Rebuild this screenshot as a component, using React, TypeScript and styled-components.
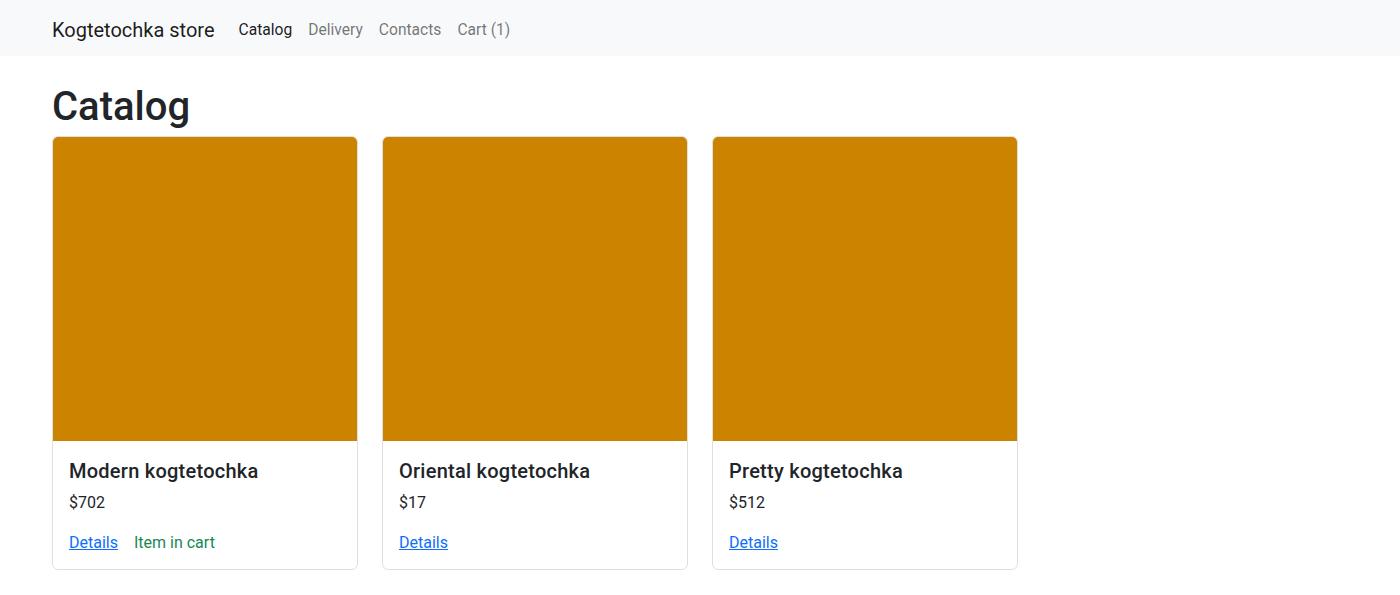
import React from "react";
import styled, { createGlobalStyle } from "styled-components";

const Global = createGlobalStyle`
  * { box-sizing: border-box; }
  body {
    margin: 0;
    font-family: "Segoe UI", Roboto, "Noto Sans", "Liberation Sans", sans-serif;
    font-size: 16px;
    line-height: 1.5;
    color: #212529;
    background: #fff;
  }
`;

const Navbar = styled.nav`
  background: #f8f9fa;
  padding: 8px 0;
`;

const Container = styled.div`
  max-width: 1320px;
  margin: 0 auto;
  padding: 0 12px;
`;

const NavInner = styled(Container)`
  display: flex;
  align-items: center;
`;

const Brand = styled.a`
  font-size: 20px;
  line-height: 30px;
  padding: 7px 0 3px;
  margin-right: 16px;
  color: rgba(0, 0, 0, 0.9);
  text-decoration: none;
`;

const NavList = styled.div`
  display: flex;
`;

const NavLink = styled.a<{ $active?: boolean }>`
  padding: 10px 8px 6px;
  line-height: 24px;
  font-size: 15.6px;
  color: ${(p) => (p.$active ? "rgba(0,0,0,0.9)" : "rgba(0,0,0,0.55)")};
  text-decoration: none;
`;

const Main = styled(Container)`
  padding-top: 24px;
`;

const Title = styled.h1`
  font-size: 40px;
  font-weight: 500;
  line-height: 1.2;
  margin: 0 0 5px;
  padding-top: 3px;
`;

const Grid = styled.div`
  display: grid;
  grid-template-columns: repeat(4, 1fr);
  gap: 24px;
`;

const Card = styled.div`
  border: 1px solid rgba(0, 0, 0, 0.125);
  border-radius: 6px;
  overflow: hidden;
  display: flex;
  flex-direction: column;
`;

const CardImage = styled.div`
  aspect-ratio: 1 / 1;
  background: #cc8400;
`;

const CardBody = styled.div`
  padding: 18px 16px 14px;
`;

const CardTitle = styled.h5`
  font-size: 20px;
  font-weight: 500;
  letter-spacing: 0.25px;
  line-height: 1.2;
  margin: 0 0 8px;
`;

const Price = styled.p`
  margin: 0 0 16px;
`;

const Actions = styled.div`
  display: flex;
  gap: 16px;
`;

const Link = styled.a`
  color: #0d6efd;
  text-decoration: underline;
`;

const InCart = styled.span`
  color: #198754;
`;

const items = [
  { name: "Modern kogtetochka", price: 702, inCart: true },
  { name: "Oriental kogtetochka", price: 17, inCart: false },
  { name: "Pretty kogtetochka", price: 512, inCart: false },
];

export default function App() {
  return (
    <>
      <Global />
      <Navbar>
        <NavInner>
          <Brand href="#">Kogtetochka store</Brand>
          <NavList>
            <NavLink $active href="#">Catalog</NavLink>
            <NavLink href="#">Delivery</NavLink>
            <NavLink href="#">Contacts</NavLink>
            <NavLink href="#">Cart (1)</NavLink>
          </NavList>
        </NavInner>
      </Navbar>
      <Main>
        <Title>Catalog</Title>
        <Grid>
          {items.map((it) => (
            <Card key={it.name}>
              <CardImage />
              <CardBody>
                <CardTitle>{it.name}</CardTitle>
                <Price>${it.price}</Price>
                <Actions>
                  <Link href="#">Details</Link>
                  {it.inCart && <InCart>Item in cart</InCart>}
                </Actions>
              </CardBody>
            </Card>
          ))}
        </Grid>
      </Main>
    </>
  );
}
